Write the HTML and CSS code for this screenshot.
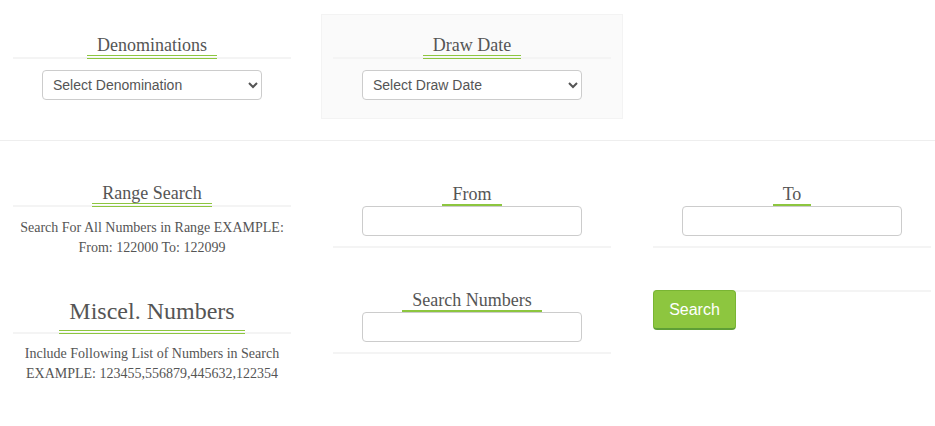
FILE: index.html
```html
<!DOCTYPE html>
<html lang="en">
<head>
<meta charset="utf-8">
<title>Search</title>
<link rel="stylesheet" href="styles.css">
</head>
<body>
<div class="grid top">
  <div class="col">
    <h3 class="title"><span>Denominations</span></h3>
    <div class="field"><select class="sel"><option>Select Denomination</option></select></div>
  </div>
  <div class="col box">
    <h3 class="title"><span>Draw Date</span></h3>
    <div class="field"><select class="sel"><option>Select Draw Date</option></select></div>
  </div>
  <div class="col"></div>
</div>
<hr class="sep">
<div class="grid r2">
  <div class="col">
    <h3 class="title"><span>Range Search</span></h3>
    <p class="desc">Search For All Numbers in Range EXAMPLE:<br>From: 122000 To: 122099</p>
  </div>
  <div class="col group">
    <div class="label"><span>From</span></div>
    <input class="inp" type="text">
  </div>
  <div class="col group">
    <div class="label"><span>To</span></div>
    <input class="inp" type="text">
  </div>
</div>
<div class="grid r3">
  <div class="col">
    <h3 class="title big"><span>Miscel. Numbers</span></h3>
    <p class="desc small-gap">Include Following List of Numbers in Search<br>EXAMPLE: 123455,556879,445632,122354</p>
  </div>
  <div class="col group">
    <div class="label first"><span>Search Numbers</span></div>
    <input class="inp" type="text">
  </div>
  <div class="col action">
    <button class="btn" type="button">Search</button>
  </div>
</div>
</body>
</html>
```
FILE: styles.css
```css
body {
  margin: 0;
  font-family: "Liberation Serif", "Times New Roman", serif;
  color: #555;
  background: #fff;
}
.grid {
  display: grid;
  grid-template-columns: 278px 278px 278px;
  column-gap: 42px;
  padding-left: 13px;
  align-items: start;
}
.top {
  padding-top: 14px;
}
.box {
  margin: 0 -12px;
  padding: 0 11px 18px;
  background: #fafafa;
  border: 1px solid #f3f3f3;
}
.title {
  margin: 21px 0 0;
  display: flex;
  justify-content: center;
  border-bottom: 2px solid #f4f4f4;
  font-size: 18px;
  font-weight: normal;
  line-height: 20px;
}
.box .title {
  margin-top: 20px;
}
.title span {
  padding: 0 10px;
  border-bottom: 4px double #8dc63f;
  margin-bottom: -2px;
}
.field {
  display: flex;
  justify-content: center;
  margin-top: 11px;
}
.sel {
  width: 220px;
  height: 30px;
  border: 1px solid #ccc;
  border-radius: 4px;
  background: #fff;
  color: #555;
  font-family: "Liberation Sans", Arial, sans-serif;
  font-size: 14px;
  padding: 0 6px;
}
.sep {
  margin: 21px 0 0;
  height: 0;
  border: 0;
  border-top: 1px solid #eee;
}
.r2 {
  padding-top: 42px;
}
.r2 .title {
  margin-top: 0;
}
.desc {
  margin: 11px 0 0;
  text-align: center;
  font-size: 14px;
  line-height: 20px;
}
.desc.small-gap {
  margin-top: 10px;
}
.group {
  padding-bottom: 10px;
  border-bottom: 2px solid #f4f4f4;
}
.label {
  display: flex;
  justify-content: center;
  margin-top: 1px;
  font-size: 18px;
  line-height: 20px;
}
.label.first {
  margin-top: 0;
}
.label span {
  padding: 0 10px;
  border-bottom: 2px solid #8dc63f;
}
.inp {
  display: block;
  box-sizing: border-box;
  width: 220px;
  height: 30px;
  margin: 0 auto;
  border: 1px solid #ccc;
  border-radius: 4px;
  background: #fff;
}
.r3 {
  padding-top: 32px;
}
.big {
  margin-top: 6px;
  font-size: 24px;
  line-height: 30px;
}
.big span {
  padding-bottom: 4px;
}
.action {
  border-top: 2px solid #f4f4f4;
}
.btn {
  display: block;
  margin-top: -2px;
  box-sizing: border-box;
  height: 40px;
  width: 83px;
  padding: 0;
  background: #8dc63f;
  border: 1px solid #79b533;
  border-bottom: 2px solid #5e9f36;
  border-radius: 4px;
  color: #fff;
  font-family: "Liberation Sans", Arial, sans-serif;
  font-size: 16px;
}
```
